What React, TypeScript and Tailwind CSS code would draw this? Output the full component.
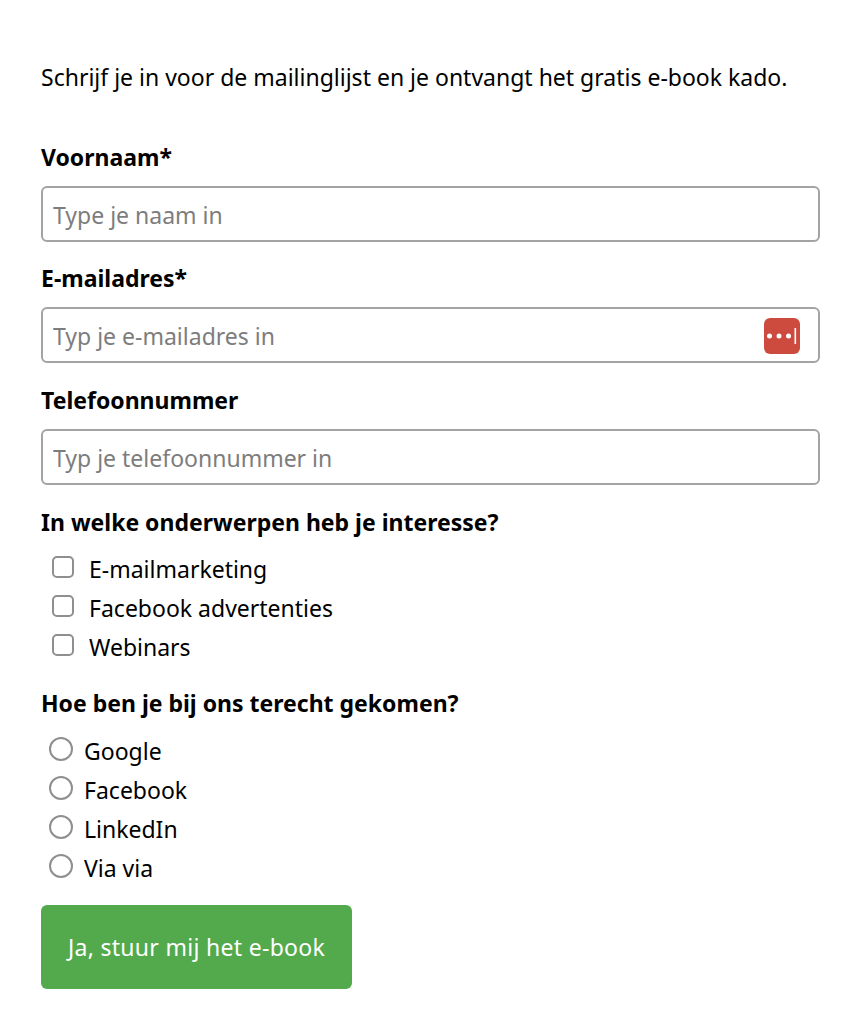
const font = "font-['Noto_Sans','Liberation_Sans',sans-serif]";

const fields = [
  { label: 'Voornaam*', placeholder: 'Type je naam in', type: 'text' },
  { label: 'E-mailadres*', placeholder: 'Typ je e-mailadres in', type: 'email', keyIcon: true },
  { label: 'Telefoonnummer', placeholder: 'Typ je telefoonnummer in', type: 'tel' },
];

const topics = ['E-mailmarketing', 'Facebook advertenties', 'Webinars'];
const sources = ['Google', 'Facebook', 'LinkedIn', 'Via via'];

const PasswordIcon = () => (
  <svg className="absolute right-[20px] top-[11px] h-[36px] w-[36px]" viewBox="0 0 36 36" fill="none">
    <rect width="36" height="36" rx="6" fill="#cd4a3f" />
    <circle cx="5.5" cy="18" r="2.5" fill="#fff" />
    <circle cx="15" cy="18" r="2.5" fill="#fff" />
    <circle cx="24.5" cy="18" r="2.5" fill="#fff" />
    <rect x="30.5" y="10" width="1.6" height="16" fill="#fff" />
  </svg>
);

export default function App() {
  return (
    <div className={`${font} min-h-screen bg-white px-[41px] pt-[60px] text-[23px] text-black`}>
      <p className="mb-[48px] h-[34px] whitespace-nowrap leading-[34px]">
        Schrijf je in voor de mailinglijst en je ontvangt het gratis e-book kado.
      </p>

      <form className="w-[779px]">
        <div className="mb-[21.8px] flex flex-col gap-[21.4px]">
          {fields.map(f => (
            <div key={f.label}>
              <label className="mb-[13px] block h-[31px] font-bold leading-[31px]">{f.label}</label>
              <div className="relative">
                <input
                  type={f.type}
                  placeholder={f.placeholder}
                  className="block h-[56px] w-full rounded-md border-2 border-[#a3a3a3] bg-white px-[10px] pt-[2px] outline-none placeholder:text-[#7d7d7d]"
                />
                {f.keyIcon && <PasswordIcon />}
              </div>
            </div>
          ))}
        </div>

        <div className="mb-[16px] h-[31px] font-bold leading-[31px]">
          In welke onderwerpen heb je interesse?
        </div>
        <div className="mb-[25px] flex flex-col gap-[8px] pl-[11px]">
          {topics.map(t => (
            <label key={t} className="flex h-[31px] items-center">
              <input type="checkbox" className="mr-[15px] mb-[4px] h-[22px] w-[22px] appearance-none rounded-[5px] border-2 border-[#8f8f8f] bg-white" />
              {t}
            </label>
          ))}
        </div>

        <div className="mb-[17px] h-[31px] font-bold leading-[31px]">
          Hoe ben je bij ons terecht gekomen?
        </div>
        <div className="mb-[21px] flex flex-col gap-[8px] pl-[8px]">
          {sources.map(s => (
            <label key={s} className="flex h-[31px] items-center">
              <input type="radio" className="mr-[11px] mb-[5px] h-[24px] w-[24px] appearance-none rounded-full border-2 border-[#8f8f8f] bg-white" />
              {s}
            </label>
          ))}
        </div>

        <button type="button" className="h-[84px] w-[311px] rounded-md bg-[#52aa4d] pt-[2px] text-center tracking-[0.3px] text-white">
          Ja, stuur mij het e-book
        </button>
      </form>
    </div>
  );
}
